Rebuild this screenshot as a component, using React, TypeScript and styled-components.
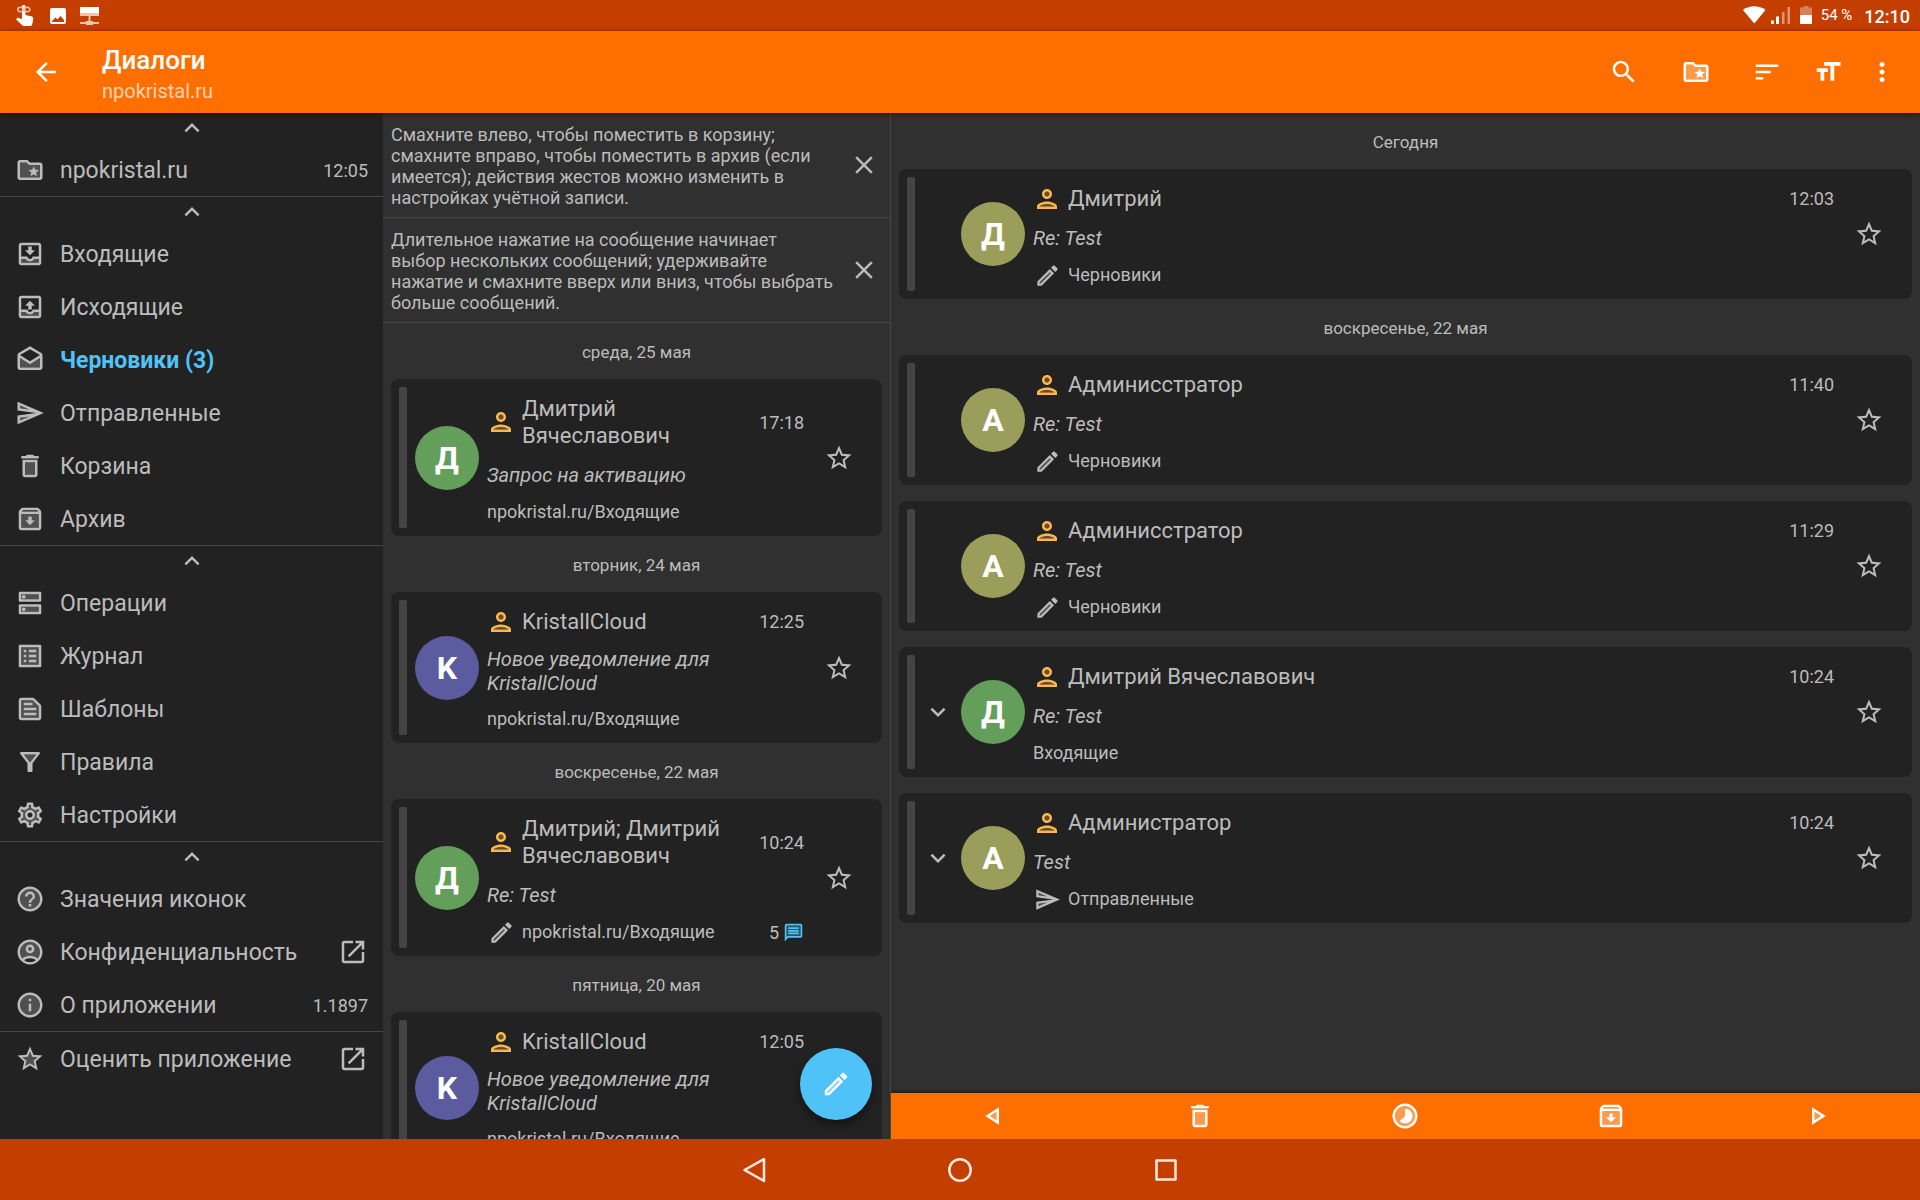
import React from "react";
import styled, { createGlobalStyle } from "styled-components";

const color = {
  primary: "#ff6f00",
  primaryDark: "#c43e00",
  surface: "#303030",
  panel: "#222222",
  line: "#464646",
  bar: "#444444",
  text: "#bcbcbc",
  accent: "#4fc3f7",
  contact: "#ffb74d",
};

const GlobalStyle = createGlobalStyle`
  *, *::before, *::after { box-sizing: border-box; }
  body {
    margin: 0;
    background: ${color.surface};
    color: ${color.text};
    font-family: Roboto, "Noto Sans", sans-serif;
    font-size: 18px;
    line-height: 21px;
  }
  button {
    margin: 0;
    padding: 0;
    border: 0;
    background: none;
    color: inherit;
    font: inherit;
    cursor: pointer;
  }
  a { color: inherit; text-decoration: none; }
  h1, h2, h3, p { margin: 0; padding: 0; font-weight: 400; }
`;

/* ---------- icons ---------- */

type Glyph = { line: string; fill?: string };

const glyphs = {
  up: { line: "M12 8l-6 6 1.41 1.41L12 10.83l4.59 4.58L18 14z" },
  down: { line: "M16.59 8.59L12 13.17 7.41 8.59 6 10l6 6 6-6z" },
  back: { line: "M20 11H7.83l5.59-5.59L12 4l-8 8 8 8 1.41-1.41L7.83 13H20v-2z" },
  close: { line: "M19 6.41L17.59 5 12 10.59 6.41 5 5 6.41 10.59 12 5 17.59 6.41 19 12 13.41 17.59 19 19 17.59 13.41 12z" },
  search: {
    line: "M15.5 14h-.79l-.28-.27C15.41 12.59 16 11.11 16 9.5 16 5.91 13.09 3 9.5 3S3 5.91 3 9.5 5.91 16 9.5 16c1.61 0 3.09-.59 4.23-1.57l.27.28v.79l5 4.99L20.49 19l-4.99-5zm-6 0C7.01 14 5 11.99 5 9.5S7.01 5 9.5 5 14 7.01 14 9.5 11.99 14 9.5 14z",
  },
  sort: { line: "M3 18h6v-2H3v2zM3 6v2h18V6H3zm0 7h12v-2H3v2z" },
  textSize: { line: "M9 4v3h5v12h3V7h5V4H9zm-6 8h3v7h3v-7h3V9H3v3z" },
  more: {
    line: "M12 8c1.1 0 2-.9 2-2s-.9-2-2-2-2 .9-2 2 .9 2 2 2zm0 2c-1.1 0-2 .9-2 2s.9 2 2 2 2-.9 2-2-.9-2-2-2zm0 6c-1.1 0-2 .9-2 2s.9 2 2 2 2-.9 2-2-.9-2-2-2z",
  },
  folderStar: {
    line: "M20 6h-8l-2-2H4c-1.1 0-1.99.9-1.99 2L2 18c0 1.1.9 2 2 2h16c1.1 0 2-.9 2-2V8c0-1.1-.9-2-2-2zm0 12H4V6h5.17l2 2H20v10zM15 9l1.19 2.79 3.03.26-2.3 1.99.69 2.96L15 15.43 12.39 17l.69-2.96-2.3-1.99 3.03-.26z",
    fill: "M11.17 8l-2-2H4v12h16V8z",
  },
  inbox: {
    line: "M16 9h-2.55V6h-2.9v3H8l4 4zm3-6H4.99C3.88 3 3 3.9 3 5v14c0 1.1.88 2 1.99 2H19c1.1 0 2-.9 2-2V5c0-1.1-.9-2-2-2zm0 16H5v-3h3.56c.69 1.19 1.97 2 3.45 2s2.75-.81 3.45-2H19v3zm0-5h-4.99c0 1.1-.9 2-2 2s-2-.9-2-2H5l-.01-9H19v9z",
    fill: "M12.01 18c-1.48 0-2.75-.81-3.45-2H5v3h14v-3h-3.55c-.69 1.19-1.97 2-3.44 2z",
  },
  outbox: {
    line: "M8 11h2.55v3h2.9v-3H16l-4-4zm11-8H4.99C3.88 3 3 3.9 3 5v14c0 1.1.88 2 1.99 2H19c1.1 0 2-.9 2-2V5c0-1.1-.9-2-2-2zm0 16H5v-3h3.56c.69 1.19 1.97 2 3.45 2s2.75-.81 3.45-2H19v3zm0-5h-4.99c0 1.1-.9 2-2 2s-2-.9-2-2H5l-.01-9H19v9z",
    fill: "M12.01 18c-1.48 0-2.75-.81-3.45-2H5v3h14v-3h-3.55c-.69 1.19-1.97 2-3.44 2z",
  },
  drafts: {
    line: "M21.99 8c0-.72-.37-1.35-.94-1.7L12 1 2.95 6.3C2.38 6.65 2 7.28 2 8v10c0 1.1.9 2 2 2h16c1.1 0 2-.9 2-2l-.01-10zM12 3.32L19.99 8v.01L12 13 4 8l8-4.68zM4 18v-7.66l8 5.02 7.99-5.02L20 18H4z",
    fill: "M12 15.36l-8-5.02V18h16l-.01-7.66z",
  },
  send: {
    line: "M2.01 3L2 10l15 2-15 2 .01 7L23 12 2.01 3zM4 8.25V6.03l7.51 3.22-7.51-1zm.01 9.72v-2.22l7.51-1-7.51 3.22z",
    fill: "M4 8.25l7.51 1-7.5-3.22zm.01 9.72l7.5-3.22-7.51 1z",
  },
  trash: {
    line: "M15.5 4l-1-1h-5l-1 1H5v2h14V4zM6 19c0 1.1.9 2 2 2h8c1.1 0 2-.9 2-2V7H6v12zM8 9h8v10H8V9z",
    fill: "M8 9h8v10H8z",
  },
  archive: {
    line: "M20.54 5.23l-1.39-1.68C18.88 3.21 18.47 3 18 3H6c-.47 0-.88.21-1.16.55L3.46 5.23C3.17 5.57 3 6.02 3 6.5V19c0 1.1.9 2 2 2h14c1.1 0 2-.9 2-2V6.5c0-.48-.17-.93-.46-1.27zM6.24 5h11.52l.83 1H5.42l.82-1zM5 19V8h14v11H5zm8.45-9h-2.9v3H8l4 4 4-4h-2.55z",
    fill: "M5 19h14V8H5v11zm5.55-6v-3h2.9v3H16l-4 4-4-4h2.55z",
  },
  operations: {
    line: "M19 15v4H5v-4h14m1-2H4c-.55 0-1 .45-1 1v6c0 .55.45 1 1 1h16c.55 0 1-.45 1-1v-6c0-.55-.45-1-1-1zM7 18.5c-.82 0-1.5-.67-1.5-1.5s.68-1.5 1.5-1.5 1.5.67 1.5 1.5-.67 1.5-1.5 1.5zM19 5v4H5V5h14m1-2H4c-.55 0-1 .45-1 1v6c0 .55.45 1 1 1h16c.55 0 1-.45 1-1V4c0-.55-.45-1-1-1zM7 8.5c-.82 0-1.5-.67-1.5-1.5S6.18 5.5 7 5.5s1.5.68 1.5 1.5S7.83 8.5 7 8.5z",
    fill: "M5 5h14v4H5zM5 15h14v4H5z",
  },
  log: {
    line: "M11 7h6v2h-6zm0 4h6v2h-6zm0 4h6v2h-6zM7 7h2v2H7zm0 4h2v2H7zm0 4h2v2H7zM20.1 3H3.9c-.5 0-.9.4-.9.9v16.2c0 .4.4.9.9.9h16.2c.4 0 .9-.5.9-.9V3.9c0-.5-.5-.9-.9-.9zM19 19H5V5h14v14z",
    fill: "M5 5h14v14H5z",
  },
  template: {
    line: "M14.17 5L19 9.83V19H5V5h9.17m0-2H5c-1.1 0-2 .9-2 2v14c0 1.1.9 2 2 2h14c1.1 0 2-.9 2-2V9.83c0-.53-.21-1.04-.59-1.41l-4.83-4.83C15.21 3.21 14.7 3 14.17 3zM7 15h10v2H7v-2zm0-4h10v2H7v-2zm0-4h7v2H7V7z",
    fill: "M14.17 5H5v14h14V9.83z",
  },
  filter: {
    line: "M7 6h10l-5.01 6.3L7 6zm-2.75-.39C6.27 8.2 10 13 10 13v6c0 .55.45 1 1 1h2c.55 0 1-.45 1-1v-6s3.72-4.8 5.74-7.39c.51-.66.04-1.61-.79-1.61H5.04c-.83 0-1.3.95-.79 1.61z",
    fill: "M7 6h10l-5.01 6.3z",
  },
  settings: {
    line: "M19.43 12.98c.04-.32.07-.64.07-.98 0-.34-.03-.66-.07-.98l2.11-1.65c.19-.15.24-.42.12-.64l-2-3.46c-.09-.16-.26-.25-.44-.25-.06 0-.12.01-.17.03l-2.49 1c-.52-.4-1.08-.73-1.69-.98l-.38-2.65C14.46 2.18 14.25 2 14 2h-4c-.25 0-.46.18-.49.42l-.38 2.65c-.61.25-1.17.59-1.69.98l-2.49-1c-.06-.02-.12-.03-.18-.03-.17 0-.34.09-.43.25l-2 3.46c-.13.22-.07.49.12.64l2.11 1.65c-.04.32-.07.65-.07.98 0 .33.03.66.07.98l-2.11 1.65c-.19.15-.24.42-.12.64l2 3.46c.09.16.26.25.44.25.06 0 .12-.01.17-.03l2.49-1c.52.4 1.08.73 1.69.98l.38 2.65c.03.24.24.42.49.42h4c.25 0 .46-.18.49-.42l.38-2.65c.61-.25 1.17-.59 1.69-.98l2.49 1c.06.02.12.03.18.03.17 0 .34-.09.43-.25l2-3.46c.12-.22.07-.49-.12-.64l-2.11-1.65zm-1.98-1.71c.04.31.05.52.05.73 0 .21-.02.43-.05.73l-.14 1.13.89.7 1.08.84-.7 1.21-1.27-.51-1.04-.42-.9.68c-.43.32-.84.56-1.25.73l-1.06.43-.16 1.13-.2 1.35h-1.4l-.19-1.35-.16-1.13-1.06-.43c-.43-.18-.83-.41-1.23-.71l-.91-.7-1.06.43-1.27.51-.7-1.21 1.08-.84.89-.7-.14-1.13c-.03-.31-.05-.54-.05-.74s.02-.43.05-.73l.14-1.13-.89-.7-1.08-.84.7-1.21 1.27.51 1.04.42.9-.68c.43-.32.84-.56 1.25-.73l1.06-.43.16-1.13.2-1.35h1.39l.19 1.35.16 1.13 1.06.43c.43.18.83.41 1.23.71l.91.7 1.06-.43 1.27-.51.7 1.21-1.07.85-.89.7.14 1.13zM12 8c-2.21 0-4 1.79-4 4s1.79 4 4 4 4-1.79 4-4-1.79-4-4-4zm0 6c-1.1 0-2-.9-2-2s.9-2 2-2 2 .9 2 2-.9 2-2 2z",
    fill: "M12 4.5a7.5 7.5 0 1 0 .01 0zM12 8.5a3.5 3.5 0 1 1-.01 0z",
  },
  help: {
    line: "M11 18h2v-2h-2v2zm1-16C6.48 2 2 6.48 2 12s4.48 10 10 10 10-4.48 10-10S17.52 2 12 2zm0 18c-4.41 0-8-3.59-8-8s3.59-8 8-8 8 3.59 8 8-3.59 8-8 8zm0-14c-2.21 0-4 1.79-4 4h2c0-1.1.9-2 2-2s2 .9 2 2c0 2-3 1.75-3 5h2c0-2.25 3-2.5 3-5 0-2.21-1.79-4-4-4z",
    fill: "M12 4a8 8 0 1 0 .01 0z",
  },
  account: {
    line: "M12 2C6.48 2 2 6.48 2 12s4.48 10 10 10 10-4.48 10-10S17.52 2 12 2zM7.35 18.5C8.66 17.56 10.26 17 12 17s3.34.56 4.65 1.5c-1.31.94-2.91 1.5-4.65 1.5s-3.34-.56-4.65-1.5zm10.79-1.38C16.45 15.8 14.32 15 12 15s-4.45.8-6.14 2.12C4.7 15.73 4 13.95 4 12c0-4.42 3.58-8 8-8s8 3.58 8 8c0 1.95-.7 3.73-1.86 5.12zM12 6c-1.93 0-3.5 1.57-3.5 3.5S10.07 13 12 13s3.5-1.57 3.5-3.5S13.93 6 12 6zm0 5c-.83 0-1.5-.67-1.5-1.5S11.17 8 12 8s1.5.67 1.5 1.5S12.83 11 12 11z",
    fill: "M12 4c-4.42 0-8 3.58-8 8 0 1.95.7 3.73 1.86 5.12C7.55 15.8 9.68 15 12 15s4.45.8 6.14 2.12C19.3 15.73 20 13.95 20 12c0-4.42-3.58-8-8-8z",
  },
  info: {
    line: "M11 7h2v2h-2zm0 4h2v6h-2zm1-9C6.48 2 2 6.48 2 12s4.48 10 10 10 10-4.48 10-10S17.52 2 12 2zm0 18c-4.41 0-8-3.59-8-8s3.59-8 8-8 8 3.59 8 8-3.59 8-8 8z",
    fill: "M12 4a8 8 0 1 0 .01 0z",
  },
  star: {
    line: "M22 9.24l-7.19-.62L12 2 9.19 8.63 2 9.24l5.46 4.73L5.82 21 12 17.27 18.18 21l-1.63-7.03L22 9.24zM12 15.4l-3.76 2.27 1-4.28-3.32-2.88 4.38-.38L12 6.1l1.71 4.04 4.38.38-3.32 2.88 1 4.28L12 15.4z",
  },
  starTone: {
    line: "M22 9.24l-7.19-.62L12 2 9.19 8.63 2 9.24l5.46 4.73L5.82 21 12 17.27 18.18 21l-1.63-7.03L22 9.24zM12 15.4l-3.76 2.27 1-4.28-3.32-2.88 4.38-.38L12 6.1l1.71 4.04 4.38.38-3.32 2.88 1 4.28L12 15.4z",
    fill: "M12 15.4l-3.76 2.27 1-4.28-3.32-2.88 4.38-.38L12 6.1l1.71 4.04 4.38.38-3.32 2.88 1 4.28z",
  },
  external: {
    line: "M19 19H5V5h7V3H5c-1.11 0-2 .9-2 2v14c0 1.1.89 2 2 2h14c1.1 0 2-.9 2-2v-7h-2v7zM14 3v2h3.59l-9.83 9.83 1.41 1.41L19 6.41V10h2V3h-7z",
  },
  person: {
    line: "M12 12c2.21 0 4-1.79 4-4s-1.79-4-4-4-4 1.79-4 4 1.79 4 4 4zm0-6c1.1 0 2 .9 2 2s-.9 2-2 2-2-.9-2-2 .9-2 2-2zm0 8c-2.67 0-8 1.34-8 4v2h16v-2c0-2.66-5.33-4-8-4zm-6 4c.22-.72 3.31-2 6-2 2.7 0 5.8 1.29 6 2H6z",
    fill: "M12 16c-2.69 0-5.77 1.28-6 2h12c-.2-.71-3.3-2-6-2zM12 6a2 2 0 1 0 .01 0z",
  },
  pencil: {
    line: "M3 17.25V21h3.75L17.81 9.94l-3.75-3.75L3 17.25zM5.92 19H5v-.92l9.06-9.06.92.92L5.92 19zM20.71 5.63l-2.34-2.34c-.2-.2-.45-.29-.71-.29s-.51.1-.7.29l-1.83 1.83 3.75 3.75 1.83-1.83c.39-.39.39-1.02 0-1.41z",
    fill: "M5 18.08V19h.92l9.06-9.06-.92-.92z",
  },
  chat: {
    line: "M4 2c-1.1 0-1.99.9-1.99 2L2 22l4-4h14c1.1 0 2-.9 2-2V4c0-1.1-.9-2-2-2H4zm0 2h16v12H5.17L4 17.17V4zM6 12h12v2H6zM6 9h12v2H6zM6 6h12v2H6z",
    fill: "M4 17.17L5.17 16H20V4H4z",
  },
  previous: { line: "M16 5L5 12l11 7V5zm-2 10.36L8.72 12 14 8.64z", fill: "M14 15.36L8.72 12 14 8.64z" },
  next: { line: "M8 5l11 7-11 7V5zm2 10.36L15.28 12 10 8.64z", fill: "M10 15.36L15.28 12 10 8.64z" },
  snooze: {
    line: "M16.24 7.76C15.07 6.59 13.54 6 12 6v6l-4.24 4.24c2.34 2.34 6.14 2.34 8.49 0 2.34-2.34 2.34-6.14-.01-8.48zM12 2C6.48 2 2 6.48 2 12s4.48 10 10 10 10-4.48 10-10S17.52 2 12 2zm0 18c-4.42 0-8-3.58-8-8s3.58-8 8-8 8 3.58 8 8-3.58 8-8 8z",
    fill: "M12 4a8 8 0 1 0 .01 0z",
  },
} satisfies Record<string, Glyph>;

type GlyphName = keyof typeof glyphs;

const Svg = styled.svg<{ $size: number; $color?: string }>`
  display: block;
  flex: none;
  width: ${(p) => p.$size}px;
  height: ${(p) => p.$size}px;
  fill: ${(p) => p.$color ?? "currentColor"};
`;

function Icon({ name, size = 30, tint }: { name: GlyphName; size?: number; tint?: string }) {
  const glyph: Glyph = glyphs[name];
  return (
    <Svg viewBox="0 0 24 24" $size={size} $color={tint} aria-hidden="true">
      {glyph.fill && <path d={glyph.fill} opacity="0.3" />}
      <path d={glyph.line} fillRule="evenodd" />
    </Svg>
  );
}

/* ---------- frame ---------- */

const Screen = styled.div`
  display: grid;
  grid-template-rows: auto auto minmax(0, 1fr) auto;
  height: 100vh;
`;

const StatusBar = styled.div`
  display: flex;
  align-items: center;
  justify-content: space-between;
  height: 31px;
  padding: 0 10px 0 14px;
  background: ${color.primaryDark};
  color: #fff;
`;

const StatusGroup = styled.div<{ $gap: number }>`
  display: flex;
  align-items: center;
  gap: ${(p) => p.$gap}px;
`;

const StatusSvg = styled.svg`
  display: block;
  height: 22px;
  fill: #fff;
`;

const Battery = styled.span`
  font-size: 15px;
`;

const Clock = styled.time`
  padding: 2px 0 0 3px;
  font-size: 18px;
  font-weight: 500;
`;

const AppBar = styled.header`
  position: relative;
  z-index: 1;
  display: flex;
  align-items: center;
  height: 82px;
  padding: 0 10px;
  background: ${color.primary};
  color: #fff;
  box-shadow: 0 1px 5px rgba(0, 0, 0, 0.5);
`;

const BarButton = styled.button<{ $width: number }>`
  display: flex;
  align-items: center;
  justify-content: center;
  width: ${(p) => p.$width}px;
  height: 72px;
`;

const Titles = styled.div`
  flex: 1;
  padding: 5px 0 0 20px;
`;

const Title = styled.h1`
  font-size: 26px;
  font-weight: 500;
  line-height: 32px;
`;

const Subtitle = styled.p`
  color: rgba(255, 255, 255, 0.7);
  font-size: 20px;
  line-height: 30px;
`;

const Columns = styled.div`
  display: grid;
  grid-template-columns: 383px 508px minmax(0, 1fr);
`;

/* ---------- navigation drawer ---------- */

const Drawer = styled.nav`
  overflow: hidden;
  background: ${color.panel};
`;

const DrawerSection = styled.section`
  border-bottom: 1px solid ${color.line};

  &:last-child {
    border-bottom: 0;
  }
`;

const Collapse = styled.button`
  display: flex;
  align-items: center;
  justify-content: center;
  width: 100%;
  height: 30px;
`;

const DrawerLink = styled.a`
  display: flex;
  align-items: center;
  gap: 15px;
  height: 53px;
  padding: 0 15px;
  font-size: 23px;
  line-height: 28px;
`;

const DrawerLabel = styled.span<{ $active?: boolean }>`
  flex: 1;
  padding-top: 2px;
  color: ${(p) => (p.$active ? color.accent : "inherit")};
  font-weight: ${(p) => (p.$active ? 700 : 400)};
  white-space: nowrap;
`;

const DrawerNote = styled.span`
  padding-top: 2px;
  font-size: 18px;
`;

/* ---------- message lists ---------- */

const Pane = styled.section<{ $divided?: boolean }>`
  position: relative;
  display: flex;
  flex-direction: column;
  min-height: 0;
  overflow: hidden;
  border-right: ${(p) => (p.$divided ? `1px solid ${color.line}` : "0")};
`;

const Scroller = styled.div`
  flex: 1;
  min-height: 0;
  overflow: hidden;
`;

const Notice = styled.div`
  display: flex;
  align-items: center;
  justify-content: space-between;
  gap: 14px;
  padding: 0 11px 0 8px;
  border-bottom: 1px solid ${color.line};
`;

const NoticeText = styled.p`
  padding: 11px 0 9px;
`;

const IconButton = styled.button`
  display: flex;
  flex: none;
`;

const DayHeading = styled.h2`
  padding-top: 10px;
  font-size: 17px;
  line-height: 38px;
  text-align: center;
`;

const Cards = styled.div`
  display: flex;
  flex-direction: column;
  gap: 16px;
  padding: 8px 8px 0;
`;

const Card = styled.article`
  display: flex;
  align-items: center;
  padding: 8px 28px 8px 8px;
  border-radius: 8px;
  background: ${color.panel};
`;

const Stripe = styled.span`
  align-self: stretch;
  flex: none;
  width: 8px;
  margin-right: 8px;
  border-radius: 2px;
  background: ${color.bar};
`;

const Expander = styled.button`
  display: flex;
  flex: none;
  width: 30px;
  height: 30px;
  margin-right: 8px;
`;

const Avatar = styled.span<{ $color: string }>`
  display: flex;
  align-items: center;
  justify-content: center;
  flex: none;
  width: 64px;
  height: 64px;
  margin-right: 8px;
  border-radius: 50%;
  background: ${(p) => p.$color};
  color: #fff;
  font-size: 32px;
  font-weight: 700;
  line-height: 38px;
`;

const Body = styled.div`
  display: flex;
  flex: 1;
  flex-direction: column;
  gap: 12px;
  min-width: 0;
  margin-right: 20px;
  padding: 8px 0 4px;
`;

const Row = styled.div`
  display: flex;
  align-items: center;
  gap: 7px;
`;

const IconSlot = styled.span`
  display: flex;
  align-items: center;
  justify-content: center;
  flex: none;
  width: 28px;
  height: 24px;
`;

const Sender = styled.h3`
  flex: 1;
  min-width: 0;
  font-size: 22px;
  line-height: 27px;
`;

const Subject = styled.p`
  display: flex;
  align-items: center;
  min-height: 27px;
  font-size: 20px;
  font-style: italic;
  line-height: 24px;
`;

const Folder = styled.span`
  flex: 1;
  line-height: 24px;
`;

const Count = styled.span`
  display: flex;
  align-items: center;
  gap: 4px;
`;

const ComposeButton = styled.button`
  position: absolute;
  right: 18px;
  bottom: 19px;
  display: flex;
  align-items: center;
  justify-content: center;
  width: 72px;
  height: 72px;
  border-radius: 50%;
  background: ${color.accent};
  color: #fff;
  box-shadow: 0 5px 10px rgba(0, 0, 0, 0.45);
`;

const ActionBar = styled.div`
  position: relative;
  display: grid;
  grid-template-columns: repeat(5, 1fr);
  height: 46px;
  background: ${color.primary};
  color: #fff;
  box-shadow: 0 -1px 3px rgba(0, 0, 0, 0.5);
`;

const ActionButton = styled.button`
  display: flex;
  align-items: center;
  justify-content: center;
`;

const SystemBar = styled.div`
  position: relative;
  display: flex;
  justify-content: center;
  height: 61px;
  background: ${color.primaryDark};
`;

const SystemButton = styled.button`
  display: flex;
  align-items: center;
  justify-content: center;
  width: 206px;
`;

const SystemSvg = styled.svg`
  width: 28px;
  height: 28px;
  fill: none;
  stroke: #ffe9df;
  stroke-width: 2.5;
  stroke-linejoin: round;
`;

/* ---------- data ---------- */

type DrawerItem = { icon: GlyphName; label: string; note?: string; external?: boolean; active?: boolean };

const drawer: { collapsible: boolean; items: DrawerItem[] }[] = [
  { collapsible: true, items: [{ icon: "folderStar", label: "npokristal.ru", note: "12:05" }] },
  {
    collapsible: true,
    items: [
      { icon: "inbox", label: "Входящие" },
      { icon: "outbox", label: "Исходящие" },
      { icon: "drafts", label: "Черновики (3)", active: true },
      { icon: "send", label: "Отправленные" },
      { icon: "trash", label: "Корзина" },
      { icon: "archive", label: "Архив" },
    ],
  },
  {
    collapsible: true,
    items: [
      { icon: "operations", label: "Операции" },
      { icon: "log", label: "Журнал" },
      { icon: "template", label: "Шаблоны" },
      { icon: "filter", label: "Правила" },
      { icon: "settings", label: "Настройки" },
    ],
  },
  {
    collapsible: true,
    items: [
      { icon: "help", label: "Значения иконок" },
      { icon: "account", label: "Конфиденциальность", external: true },
      { icon: "info", label: "О приложении", note: "1.1897" },
    ],
  },
  { collapsible: false, items: [{ icon: "starTone", label: "Оценить приложение", external: true }] },
];

const avatarColor = { green: "#649e5b", violet: "#5b5b9f", olive: "#9b9d5b" };

type Message = {
  letter: string;
  avatar: keyof typeof avatarColor;
  sender: string;
  time: string;
  subject: string;
  folder: string;
  folderIcon?: GlyphName;
  count?: number;
  expandable?: boolean;
};

type Day = { day: string; messages: Message[] };

const conversations: Day[] = [
  {
    day: "среда, 25 мая",
    messages: [
      { letter: "Д", avatar: "green", sender: "Дмитрий Вячеславович", time: "17:18", subject: "Запрос на активацию", folder: "npokristal.ru/Входящие" },
    ],
  },
  {
    day: "вторник, 24 мая",
    messages: [
      { letter: "K", avatar: "violet", sender: "KristallCloud", time: "12:25", subject: "Новое уведомление для KristallCloud", folder: "npokristal.ru/Входящие" },
    ],
  },
  {
    day: "воскресенье, 22 мая",
    messages: [
      { letter: "Д", avatar: "green", sender: "Дмитрий; Дмитрий Вячеславович", time: "10:24", subject: "Re: Test", folder: "npokristal.ru/Входящие", folderIcon: "pencil", count: 5 },
    ],
  },
  {
    day: "пятница, 20 мая",
    messages: [
      { letter: "K", avatar: "violet", sender: "KristallCloud", time: "12:05", subject: "Новое уведомление для KristallCloud", folder: "npokristal.ru/Входящие" },
    ],
  },
];

const thread: Day[] = [
  {
    day: "Сегодня",
    messages: [
      { letter: "Д", avatar: "olive", sender: "Дмитрий", time: "12:03", subject: "Re: Test", folder: "Черновики", folderIcon: "pencil" },
    ],
  },
  {
    day: "воскресенье, 22 мая",
    messages: [
      { letter: "А", avatar: "olive", sender: "Админисстратор", time: "11:40", subject: "Re: Test", folder: "Черновики", folderIcon: "pencil" },
      { letter: "А", avatar: "olive", sender: "Админисстратор", time: "11:29", subject: "Re: Test", folder: "Черновики", folderIcon: "pencil" },
      { letter: "Д", avatar: "green", sender: "Дмитрий Вячеславович", time: "10:24", subject: "Re: Test", folder: "Входящие", expandable: true },
      { letter: "А", avatar: "olive", sender: "Администратор", time: "10:24", subject: "Test", folder: "Отправленные", folderIcon: "send", expandable: true },
    ],
  },
];

const notices = [
  "Смахните влево, чтобы поместить в корзину; смахните вправо, чтобы поместить в архив (если имеется); действия жестов можно изменить в настройках учётной записи.",
  "Длительное нажатие на сообщение начинает выбор нескольких сообщений; удерживайте нажатие и смахните вверх или вниз, чтобы выбрать больше сообщений.",
];

const actions: { icon: GlyphName; label: string }[] = [
  { icon: "previous", label: "Предыдущее" },
  { icon: "trash", label: "Удалить" },
  { icon: "snooze", label: "Отложить" },
  { icon: "archive", label: "В архив" },
  { icon: "next", label: "Следующее" },
];

/* ---------- parts ---------- */

function MessageCard({ message, threaded }: { message: Message; threaded?: boolean }) {
  return (
    <Card>
      <Stripe />
      {threaded && (
        <Expander aria-label="Развернуть" disabled={!message.expandable}>
          {message.expandable && <Icon name="down" />}
        </Expander>
      )}
      <Avatar $color={avatarColor[message.avatar]}>{message.letter}</Avatar>
      <Body>
        <Row>
          <IconSlot>
            <Icon name="person" tint={color.contact} />
          </IconSlot>
          <Sender>{message.sender}</Sender>
          <time>{message.time}</time>
        </Row>
        <Subject>{message.subject}</Subject>
        <Row>
          {message.folderIcon && (
            <IconSlot>
              <Icon name={message.folderIcon} size={27} />
            </IconSlot>
          )}
          <Folder>{message.folder}</Folder>
          {message.count && (
            <Count>
              {message.count}
              <Icon name="chat" size={21} tint={color.accent} />
            </Count>
          )}
        </Row>
      </Body>
      <IconButton aria-label="Избранное">
        <Icon name="star" />
      </IconButton>
    </Card>
  );
}

function MessageList({ days, threaded }: { days: Day[]; threaded?: boolean }) {
  return (
    <Scroller>
      {days.map((group) => (
        <section key={group.day}>
          <DayHeading>{group.day}</DayHeading>
          <Cards>
            {group.messages.map((message, index) => (
              <MessageCard key={index} message={message} threaded={threaded} />
            ))}
          </Cards>
        </section>
      ))}
    </Scroller>
  );
}

export default function App() {
  return (
    <Screen>
      <GlobalStyle />
      <StatusBar>
        <StatusGroup $gap={14}>
          <StatusSvg viewBox="0 0 22 22" width="22" aria-hidden="true">
            <path d="M8 1.500a1.700 1.700 0 0 1 3.400 0v8.500l5.700 1.200c1.400.3 2.300 1.200 2.100 2.700l-.9 5.200c-.2 1.200-1 1.900-2.200 1.900H10c-.8 0-1.500-.3-2-.9L2 14.300l1.100-1.100c.5-.4 1-.5 1.600-.3L8 14z" />
            <g fill="none" stroke="#f3c4ab" strokeWidth="1.5">
              <ellipse cx="6.5" cy="4.5" rx="2.8" ry="2.3" />
              <ellipse cx="13" cy="4.5" rx="2.8" ry="2.3" />
            </g>
          </StatusSvg>
          <StatusSvg viewBox="0 0 16 22" width="16" aria-hidden="true">
            <path fillRule="evenodd" d="M2 3h12a2 2 0 0 1 2 2v12a2 2 0 0 1-2 2H2a2 2 0 0 1-2-2V5a2 2 0 0 1 2-2zM2 17h12v-2l-3.500-4-3 3.500-2-2L2 16z" />
          </StatusSvg>
          <StatusSvg viewBox="0 0 19 22" width="19" aria-hidden="true">
            <path d="M0 2h19v6H0z" />
            <path d="M0 8h19v3H0zM8.500 11h2v5h-2zM0 17h19v2H0zM6 16h7v4H6z" opacity="0.7" />
          </StatusSvg>
        </StatusGroup>
        <StatusGroup $gap={9}>
          <StatusSvg viewBox="0 0 48 22" width="48" aria-hidden="true">
            <path d="M0 5C6.500 0 16 0 22.500 5L11.300 18.500z" />
            <path d="M28 15.500h3V19h-3zM33 11.500h3V19h-3z" />
            <path d="M39 7h2.500v12H39zM44.500 2H47v17h-2.500z" opacity="0.45" />
          </StatusSvg>
          <StatusSvg viewBox="0 0 12 22" width="12" aria-hidden="true">
            <path d="M3.500 1h5v1.500H12V10H0V2.500h3.500z" opacity="0.35" />
            <path d="M0 10h12v9H0z" />
          </StatusSvg>
          <Battery>54 %</Battery>
          <Clock>12:10</Clock>
        </StatusGroup>
      </StatusBar>

      <AppBar>
        <BarButton $width={72} aria-label="Назад">
          <Icon name="back" />
        </BarButton>
        <Titles>
          <Title>Диалоги</Title>
          <Subtitle>npokristal.ru</Subtitle>
        </Titles>
        <BarButton $width={72} aria-label="Поиск">
          <Icon name="search" />
        </BarButton>
        <BarButton $width={72} aria-label="Папки">
          <Icon name="folderStar" />
        </BarButton>
        <BarButton $width={70} aria-label="Сортировка">
          <Icon name="sort" />
        </BarButton>
        <BarButton $width={52} aria-label="Размер текста">
          <Icon name="textSize" />
        </BarButton>
        <BarButton $width={56} aria-label="Ещё">
          <Icon name="more" />
        </BarButton>
      </AppBar>

      <Columns>
        <Drawer>
          {drawer.map((section, index) => (
            <DrawerSection key={index}>
              {section.collapsible && (
                <Collapse aria-label="Свернуть">
                  <Icon name="up" />
                </Collapse>
              )}
              {section.items.map((item) => (
                <DrawerLink key={item.label} href="#">
                  <Icon name={item.icon} />
                  <DrawerLabel $active={item.active}>{item.label}</DrawerLabel>
                  {item.note && <DrawerNote>{item.note}</DrawerNote>}
                  {item.external && <Icon name="external" />}
                </DrawerLink>
              ))}
            </DrawerSection>
          ))}
        </Drawer>

        <Pane $divided>
          {notices.map((text) => (
            <Notice key={text}>
              <NoticeText>{text}</NoticeText>
              <IconButton aria-label="Закрыть">
                <Icon name="close" />
              </IconButton>
            </Notice>
          ))}
          <MessageList days={conversations} />
          <ComposeButton aria-label="Написать">
            <Icon name="pencil" />
          </ComposeButton>
        </Pane>

        <Pane>
          <MessageList days={thread} threaded />
          <ActionBar>
            {actions.map((action) => (
              <ActionButton key={action.icon} aria-label={action.label}>
                <Icon name={action.icon} />
              </ActionButton>
            ))}
          </ActionBar>
        </Pane>
      </Columns>

      <SystemBar>
        <SystemButton aria-label="Назад">
          <SystemSvg viewBox="0 0 28 28">
            <path d="M24 3v22L4.500 14z" />
          </SystemSvg>
        </SystemButton>
        <SystemButton aria-label="Домой">
          <SystemSvg viewBox="0 0 28 28">
            <circle cx="14" cy="14" r="10.7" />
          </SystemSvg>
        </SystemButton>
        <SystemButton aria-label="Обзор">
          <SystemSvg viewBox="0 0 28 28">
            <path d="M4.500 4.500h19v19h-19z" />
          </SystemSvg>
        </SystemButton>
      </SystemBar>
    </Screen>
  );
}
